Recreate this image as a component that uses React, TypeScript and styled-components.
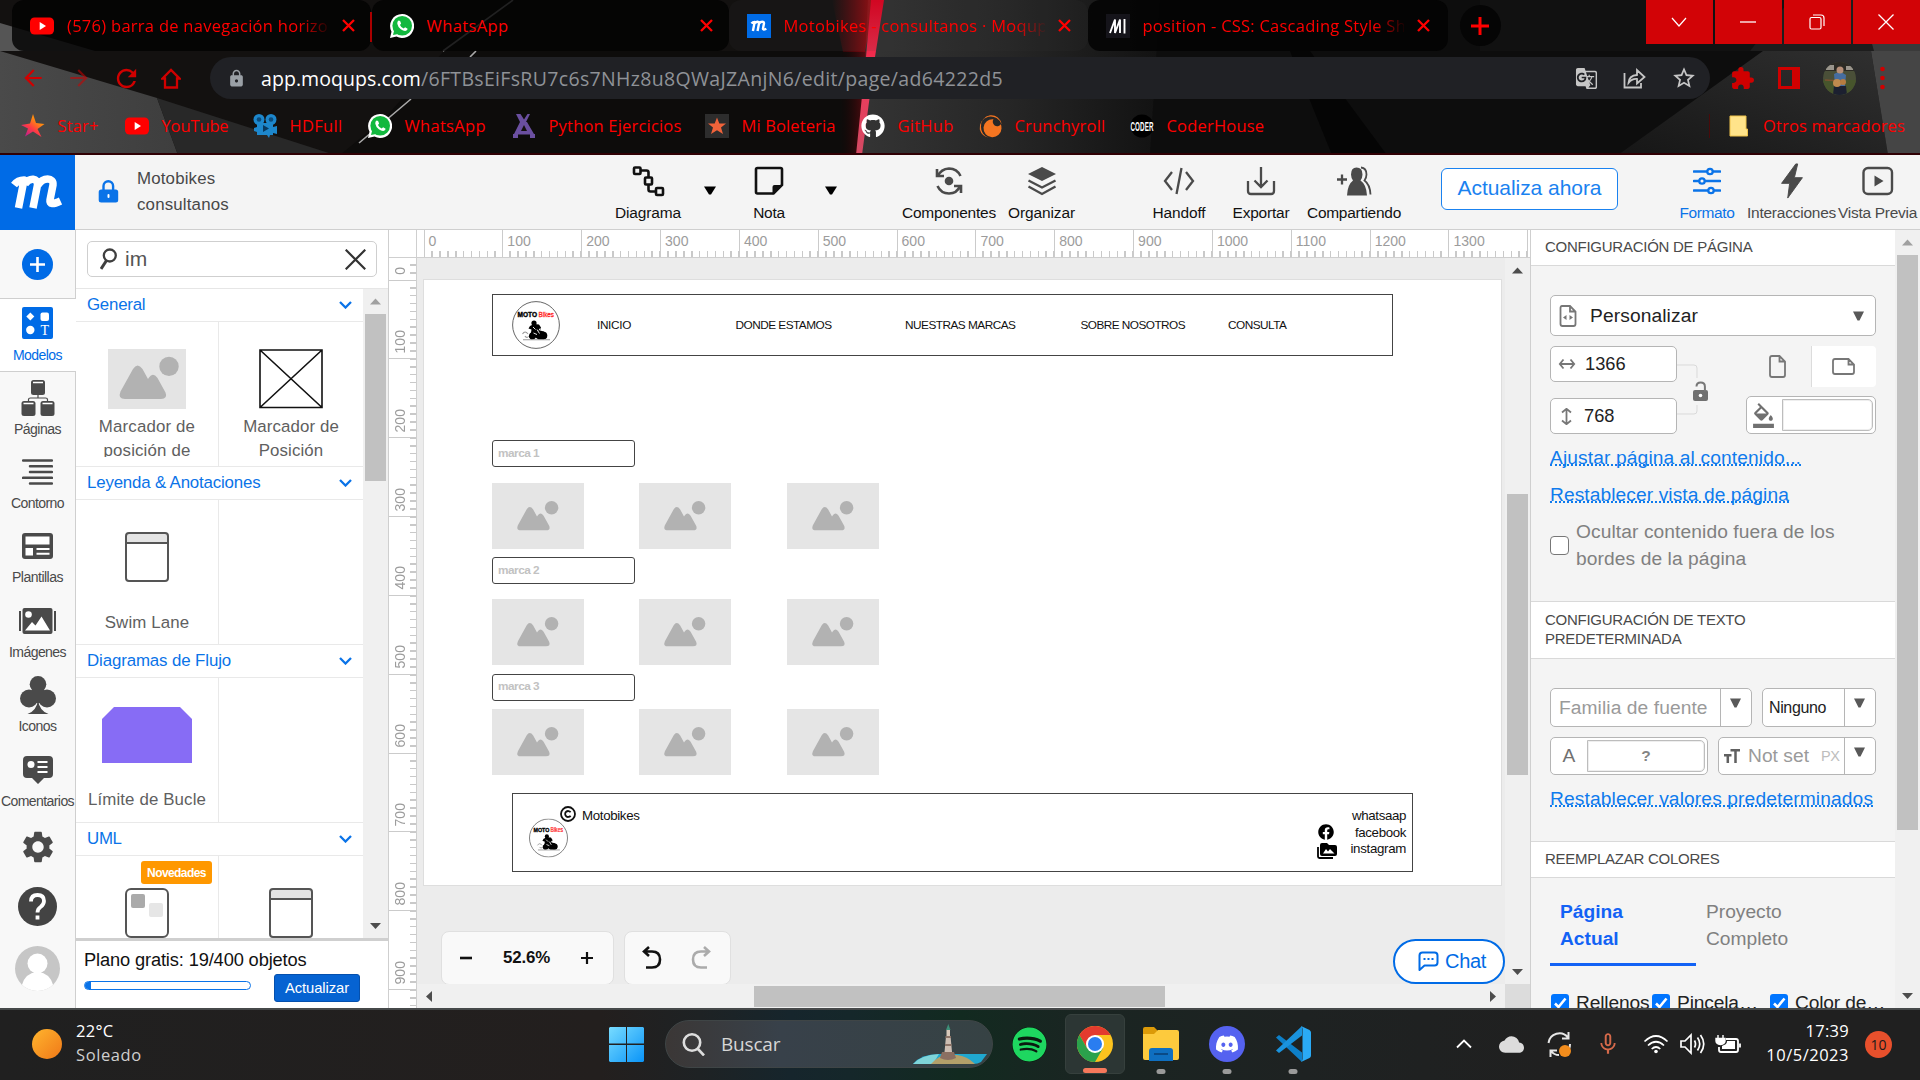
import React from "react";
import styled, { createGlobalStyle, css } from "styled-components";
import {
  MdArrowBack, MdArrowForward, MdRefresh, MdLock, MdGTranslate, MdStarBorder, MdExtension, MdSettings,
  MdMicNone, MdCloud, MdFormatColorFill,
} from "react-icons/md";
import { FaWhatsapp, FaGithub, FaDiscord, FaSpotify, FaFacebook } from "react-icons/fa";

const sans = '"Liberation Sans", Arial, sans-serif';
const ui = '"Open Sans", "Segoe UI", sans-serif';

const Global = createGlobalStyle`
  *{box-sizing:border-box}
  body{margin:0;background:#202020;overflow:hidden;font-family:${sans}}
  svg{display:block;flex:none}
`;

const Screen = styled.div`width:1920px;height:1080px;display:flex;flex-direction:column;overflow:hidden;`;

const Label = styled.span<{ $s?: number; $ls?: number; $c?: string; $b?: boolean }>`
  font-size:${p => p.$s ?? 16.87}px;letter-spacing:${p => p.$ls ?? 0}px;color:${p => p.$c ?? "inherit"};
  font-weight:${p => (p.$b ? 700 : 400)};white-space:nowrap;
`;

/* ---------- browser ---------- */
const Browser = styled.header`position:relative;height:155px;background:#12100f;border-bottom:2px solid #300004;
  display:flex;flex-direction:column;font-family:${ui};overflow:hidden;isolation:isolate;`;
const Backdrop = styled.svg`position:absolute;inset:0;z-index:-1;`;
const TabStrip = styled.div`height:51px;display:flex;padding-left:12px;flex:none;`;
const Tab = styled.div<{ $w: number; $active?: boolean }>`
  width:${p => p.$w}px;height:51px;display:flex;align-items:center;padding-left:18px;border-radius:12px;
  background:${p => (p.$active ? "rgba(60,60,60,.12)" : "rgba(3,3,2,.82)")};color:#f00;
`;
const TabText = styled.div<{ $w: number; $fade?: boolean; $ls?: number }>`
  width:${p => p.$w}px;margin-left:13px;font-size:16.5px;letter-spacing:${p => p.$ls ?? 0.28}px;white-space:nowrap;overflow:hidden;
  ${p => p.$fade && css`mask-image:linear-gradient(90deg,#000 88%,transparent 101%);`}
`;
const TabClose = styled.svg`margin-left:13px;`;
const TabRule = styled.div`width:1.5px;height:30px;background:#a00;margin:12px 0 0 -1px;`;
const NewTab = styled.div`width:41px;height:41px;border-radius:50%;background:#050505;margin:5px 0 0 12px;display:grid;place-items:center;`;
const WinButtons = styled.div`margin-left:auto;display:flex;gap:2px;`;
const WinButton = styled.div`width:67px;height:44px;background:#d20306;display:grid;place-items:center;padding-right:2px;`;

const NavBar = styled.div`height:57px;display:flex;align-items:center;padding:0 0 3px 20px;color:#d00000;flex:none;`;
const NavIcons = styled.div`display:flex;gap:20px;width:190px;align-items:center;`;
const Omnibox = styled.div`width:1500px;height:42px;border-radius:21px;background:#202125;display:flex;align-items:center;padding:0 13px 0 17px;color:#9aa0a6;`;
const Url = styled.div`flex:1;margin-left:15px;font-size:19.5px;white-space:nowrap;color:#8f9297;letter-spacing:.33px;
  b{font-weight:400;color:#fff;letter-spacing:.07px}`;
const OmniIcons = styled.div`display:flex;gap:25px;color:#c6c6c6;align-items:center;`;
const ExtIcons = styled.div`display:flex;align-items:center;margin-left:20px;gap:23px;`;

const Bookmarks = styled.div`height:45px;display:flex;align-items:center;padding:0 15px 10px 21px;color:#f00;font-size:16.5px;flex:none;`;
const Bookmark = styled.div<{ $w?: number; $ls?: number }>`
  display:flex;align-items:center;gap:12.5px;width:${p => (p.$w ? p.$w + "px" : "auto")};letter-spacing:${p => p.$ls ?? 0.2}px;white-space:nowrap;flex:none;
`;
const OtherMarks = styled.div`margin-left:auto;display:flex;align-items:center;gap:15px;letter-spacing:.14px;padding-left:19px;border-left:1px solid #4a0a0a;height:24px;`;

const YouTubeIcon = () => (
  <svg width="24" height="24" viewBox="0 0 24 24"><rect y="3.5" width="24" height="17" rx="4.5" fill="#f00" /><path d="M9.700 8v8l6.300-4z" fill="#fff" /></svg>
);
const WhatsIcon = () => (
  <svg width="24" height="24" viewBox="0 0 24 24">
    <path d="M12 0a12 12 0 1 1-5.500 22.600L0 24l1.500-6.300A12 12 0 0 1 12 0z" fill="#fff" />
    <circle cx="12.200" cy="11.800" r="9.800" fill="#12b83e" /><path d="M3 21l1.300-5 4 4z" fill="#12b83e" />
    <path d="M8.600 6.600q-1.600.9-1.300 3.100.6 3.300 3.500 5.500 3 2.200 5.200 1.600 1.500-.5 1.600-2.100l-2.500-1.500-1.400 1.400q-2.600-1-3.700-3.700l1.100-1.300-1-2.700z" fill="#fff" />
  </svg>
);
const MScript = ({ size, fill }: { size: number; fill: string }) => (
  <svg width={size} height={size} viewBox="0 0 75 75"><rect width="75" height="75" fill={fill} />
    <path d="M14 30 Q18 25 24 25 L18.500 53 M25 29 C30 22 38 23 37.500 30 L33 53 M38 30 C43 22 54 22 53 30 L50 45 Q49 51.500 60.500 46" fill="none" stroke="#fff" strokeWidth="7.500" strokeLinejoin="round" />
  </svg>
);
const MozIcon = () => (
  <svg width="24" height="24" viewBox="0 0 24 24"><rect width="24" height="24" fill="#15141a" /><path d="M4 19 9 5.500V19L14 5.500V19M18.500 5v14.500" fill="none" stroke="#fff" strokeWidth="1.900" strokeLinejoin="bevel" /></svg>
);
const CloseX = () => <TabClose width="13" height="13" viewBox="0 0 13 13"><path d="M1 1l11 11M12 1 1 12" stroke="#f00" strokeWidth="2.300" /></TabClose>;

const BrowserBackdrop = () => (
  <Backdrop width="1920" height="155" viewBox="0 0 1920 155">
    <defs>
      <linearGradient id="glow" x1="0" x2="1"><stop offset="0" stopColor="#a0000c" stopOpacity="0" /><stop offset="1" stopColor="#b80c10" stopOpacity=".9" /></linearGradient>
      <linearGradient id="grayGlow" x1="0" x2="1"><stop offset="0" stopColor="#343434" /><stop offset=".45" stopColor="#262626" /><stop offset="1" stopColor="#0e0e0e" /></linearGradient>
      <linearGradient id="beam" x1="0" y1="0" x2="0" y2="1"><stop offset="0" stopColor="#e6001f" /><stop offset=".45" stopColor="#f4385a" /><stop offset="1" stopColor="#d24a63" /></linearGradient>
      <linearGradient id="lowGlow" x1="0" x2="1"><stop offset="0" stopColor="#200" stopOpacity="0" /><stop offset="1" stopColor="#7a0c14" stopOpacity=".7" /></linearGradient>
      <linearGradient id="slab" x1="0" y1="1" x2="1" y2="0"><stop offset="0" stopColor="#161616" /><stop offset="1" stopColor="#303030" /></linearGradient>
      <linearGradient id="leftSlab" x1="0" x2="1"><stop offset="0" stopColor="#4a4a4a" /><stop offset="1" stopColor="#3e3e3e" /></linearGradient>
    </defs>
    <path d="M0 0h868v155H0z" fill="#131110" />
    <path d="M0 51 157 98 178 155H0z" fill="url(#leftSlab)" />
    <path d="M157 98 335 155H178z" fill="#282828" />
    <path d="M0 23 95 51H0z" fill="#555" />
    <path d="M444 51 385 118 340 155H868V51z" fill="#0d0c0b" />
    <path d="M513 0 443 51M476 51 470 57M411 99 359 143" stroke="#a9a9a9" strokeWidth="1.600" fill="none" />
    <path d="M868 0h322l-30 155H860z" fill="url(#grayGlow)" />
    <path d="M832 0h43l-10 52h-22z" fill="url(#glow)" />
    <path d="M840 51h26l-8 104h-18z" fill="url(#lowGlow)" />
    <path d="M871 0h13l-9 57-13 98h-6l10-98z" fill="url(#beam)" />
    <path d="M1160 0h760v155h-770z" fill="#0d0d0d" />
    <path d="M1290 51h20l77 104h-55z" fill="#050505" />
    <path d="M1763 51 1618 155h270l-17-104z" fill="url(#slab)" />
    <path d="M1480 0h440v51h-440z" fill="#111" />
    <path d="M1790 0h130v51h-170z" fill="#1d1d1d" />
    <path d="M1871 51h49v104h-32z" fill="#454545" /><path d="M1860 0h60v51h-46z" fill="#3a3a3a" />
  </Backdrop>
);

/* ---------- editor header ---------- */
const Head = styled.div`height:75px;background:#f4f4f4;border-bottom:1px solid #cfcfcf;display:flex;flex:none;color:#111;`;
const Brand = styled.div`width:75px;height:75px;background:#006be6;flex:none;`;
const DocTitle = styled.div`display:flex;align-items:center;width:523px;padding-left:23px;gap:18px;color:#484848;line-height:26px;padding-bottom:1px;`;
const Tool = styled.div<{ $w: number; $ml?: number; $c?: string }>`
  width:${p => p.$w}px;margin-left:${p => p.$ml ?? 0}px;color:${p => p.$c ?? "#111"};display:flex;flex-direction:column;align-items:center;flex:none;
  svg{height:36px;margin-top:8px} span{line-height:20px;margin-top:4px}
`;
const Caret = styled.div<{ $ml: number }>`width:22px;margin-left:${p => p.$ml}px;display:flex;justify-content:center;padding-top:31px;`;
const Upgrade = styled.div`width:177px;height:42px;margin:13px 0 0 37px;border:1.5px solid #1a82f0;border-radius:6px;background:#fff;color:#1a82f0;display:grid;place-items:center;padding-bottom:2px;`;

/* ---------- editor body ---------- */
const Body = styled.div`height:778px;display:flex;flex:none;overflow:hidden;background:#fff;`;
const Rail = styled.div`width:76px;background:#f8f8f8;border-right:1px solid #cfcfcf;display:flex;flex-direction:column;flex:none;`;
const RailAdd = styled.div`height:69px;border-bottom:1px solid #cfcfcf;display:flex;justify-content:center;padding-top:18.5px;flex:none;`;
const RailItem = styled.div<{ $on?: boolean }>`
  height:${p => (p.$on ? 72.6 : 74.4)}px;flex:none;width:75px;display:flex;flex-direction:column;align-items:center;color:${p => (p.$on ? "#006be6" : "#4a4a4a")};
  ${p => p.$on && css`background:#fff;border-bottom:1px solid #cfcfcf;width:76px;padding-right:1px;`}
  svg{margin-top:${p => (p.$on ? 4 : 6)}px;height:40px} span{line-height:18px;margin-top:${p => (p.$on ? 3 : 2)}px}
`;
const RailBox = styled.div<{ $h: number }>`height:${p => p.$h}px;display:grid;place-items:center;flex:none;width:75px;`;

const Library = styled.div`width:313px;border-right:1px solid #cfcfcf;display:flex;flex-direction:column;flex:none;`;
const SearchRow = styled.div`height:59px;border-bottom:1px solid #e6e6e6;padding:11px 11px 0 11px;flex:none;`;
const SearchBox = styled.div`height:36px;border:1px solid #cfcfcf;border-radius:5px;display:flex;align-items:center;padding:0 10px 0 12px;color:#555;
  span{flex:1;margin-left:8px}`;
const Shelf = styled.div`display:flex;height:649px;flex:none;`;
const Stencils = styled.div`width:287px;overflow:hidden;`;
const GroupHead = styled.div`height:33px;display:flex;align-items:center;justify-content:space-between;padding:0 11px;border-bottom:1px solid #e9e9e9;color:#0a73e8;`;
const Cells = styled.div`display:grid;grid-template-columns:143px 144px;height:145px;border-bottom:1px solid #e9e9e9;`;
const Cell = styled.div<{ $pt: number; $gap?: number }>`
  display:flex;flex-direction:column;align-items:center;padding-top:${p => p.$pt}px;gap:${p => p.$gap ?? 6}px;color:#606060;line-height:24px;text-align:center;
  overflow:hidden;position:relative;&:first-child{border-right:1px solid #e9e9e9}
`;
const TwoLines = styled.div`height:42px;overflow:hidden;`;
const New = styled.div`position:absolute;right:6px;top:5px;height:23px;width:71px;background:#ff9800;border-radius:3px;color:#fff;display:grid;place-items:center;line-height:1;`;
const Plan = styled.div`border-top:3px solid #cfcfcf;height:70px;padding:7px 28px 0 8px;color:#111;flex:none;display:flex;flex-direction:column;line-height:24px;`;
const PlanRow = styled.div`display:flex;justify-content:space-between;margin-top:2px;`;
const Meter = styled.div`width:167px;height:9px;margin-top:7px;border:1px solid #0a73e8;border-radius:5px;overflow:hidden;&::before{content:"";display:block;width:6px;height:9px;background:#0a73e8}`;
const PlanButton = styled.div`width:86px;height:28px;background:#0663d2;border:1px solid #0550ad;border-radius:3px;color:#fff;display:grid;place-items:center;padding-bottom:1px;`;

/* ---------- scrollbars ---------- */
const Bar = styled.div<{ $h?: boolean }>`display:flex;flex-direction:${p => (p.$h ? "row" : "column")};background:#f0f0f0;${p => (p.$h ? "height:24px" : "width:25px")};flex:none;align-items:center;`;
const BarEnd = styled.div`width:25px;height:25px;display:grid;place-items:center;flex:none;`;
const Thumb = styled.div<{ $h?: boolean; $at: number; $len: number }>`background:#c1c1c1;flex:none;
  ${p => (p.$h ? css`width:${p.$len}px;height:21px;margin:0 auto 0 ${p.$at}px;` : css`height:${p.$len}px;width:21px;margin:${p.$at}px 0 auto;`)}`;
const arrows: Record<string, string> = { up: "M0 8.500 5.500 2.500 11 8.500z", down: "M0 3 5.500 9 11 3z", left: "M8 0 2 5.500 8 11z", right: "M3 0 9 5.500 3 11z" };
const Arrow = ({ d, c = "#4d4d4d" }: { d: string; c?: string }) => <BarEnd><svg width="11" height="11" viewBox="0 0 11 11"><path d={arrows[d]} fill={c} /></svg></BarEnd>;
const Scroll = ({ h, at, len, dim }: { h?: boolean; at: number; len: number; dim?: boolean }) => (
  <Bar $h={h}><Arrow d={h ? "left" : "up"} c={dim ? "#a0a0a0" : undefined} /><Thumb $h={h} $at={at} $len={len} /><Arrow d={h ? "right" : "down"} /></Bar>
);

/* ---------- canvas ---------- */
const Center = styled.div`width:1142px;display:flex;flex-direction:column;flex:none;border-right:1px solid #cfcfcf;`;
const RulerTop = styled.div`height:28px;border-bottom:1px solid #cfcfcf;display:flex;overflow:hidden;flex:none;background:#fff;`;
const Corner = styled.div`width:28px;border-right:1px solid #cfcfcf;margin-right:6.5px;flex:none;`;
const SegX = styled.div`width:78.85px;flex:none;border-left:1.5px solid #cbcbcb;padding-left:4px;color:#9c9c9c;font-size:14.06px;line-height:22px;
  background:repeating-linear-gradient(90deg,transparent 0 6.385px,#c9c9c9 6.385px 7.885px) 0 100%/100% 6px no-repeat;`;
const Work = styled.div`display:flex;flex:1;`;
const RulerLeft = styled.div`width:28px;border-right:1px solid #cfcfcf;overflow:hidden;display:flex;flex-direction:column;flex:none;background:#fff;`;
const SegY = styled.div<{ $len?: number }>`height:${p => p.$len ?? 78.85}px;flex:none;border-bottom:1.5px solid #cbcbcb;color:#9c9c9c;font-size:14.06px;line-height:14px;display:flex;align-items:flex-end;padding:0 0 5px 4px;
  background:repeating-linear-gradient(0deg,transparent 0 6.385px,#c9c9c9 6.385px 7.885px) 100% 0/6px 100% no-repeat;
  span{writing-mode:vertical-rl;transform:rotate(180deg)}`;
const Stage = styled.div`display:grid;grid-template-columns:1088px 25px;grid-template-rows:726px 24px;`;
const Viewport = styled.div`position:relative;background:#ececec;overflow:hidden;`;
const CornerBox = styled.div`background:#dcdcdc;`;
const Page = styled.div`position:absolute;left:6px;top:21px;width:1079px;height:607px;background:#fff;border:1px solid #dedede;`;
const Shape = styled.div<{ $x: number; $y: number; $w: number; $h: number; $r?: number }>`
  position:absolute;left:${p => p.$x - 424}px;top:${p => p.$y - 280}px;width:${p => p.$w}px;height:${p => p.$h}px;border:1px solid #444;border-radius:${p => p.$r ?? 0}px;
`;
const Pin = styled.div<{ $x: number; $y: number; $end?: boolean }>`
  position:absolute;top:${p => p.$y - 280}px;transform:translateY(-50%);display:flex;color:#111;
  ${p => (p.$end ? css`right:${1501 - p.$x}px;` : css`left:${p.$x - 424}px;`)}
`;
const BrandField = styled(Shape)`display:flex;align-items:center;padding:0 0 2px 5px;`;
const Float = styled.div<{ $x: number; $w: number }>`position:absolute;left:${p => p.$x}px;top:673px;width:${p => p.$w}px;height:54px;background:#f9f9f9;border:1px solid #e0e0e0;border-radius:8px;
  display:flex;align-items:center;justify-content:space-between;padding:0 19px 1px 17px;color:#111;`;
const Chat = styled.div`position:absolute;left:976px;top:681px;width:112px;height:45px;border:2.5px solid #006be6;border-radius:23px;background:#fff;color:#006be6;display:flex;align-items:center;padding-left:23px;gap:6px;`;

const Mountains = () => (
  <g fill="#b2b2b2"><path d="M17 50H53q7 0 4.500-6.500L49.500 29q-4.500-6-8.500-.5L40 30 34.500 20q-5-7-9.500 0L12.500 42.500Q9.500 50 17 50z" /><circle cx="61" cy="17.400" r="9.700" /></g>
);
const Placeholder = () => (
  <svg width="92" height="66" viewBox="0 0 92 66"><rect width="92" height="66" fill="#e5e5e5" /><g transform="translate(17.200 12.600) scale(.695)"><Mountains /></g></svg>
);
const MotoLogo = ({ size }: { size: number }) => (
  <svg width={size} height={size} viewBox="0 0 48 48">
    <circle cx="24" cy="24" r="23.400" fill="#fff" stroke="#555" strokeWidth=".9" />
    <text x="5.500" y="16.200" fontFamily={sans} fontWeight="700" fontSize="7" textLength="19.500" lengthAdjust="spacingAndGlyphs" fill="#000" stroke="#000" strokeWidth=".4">MOTO</text>
    <text x="26.500" y="16.200" fontFamily={sans} fontSize="8" textLength="15.500" lengthAdjust="spacingAndGlyphs" fill="#f22" stroke="#f22" strokeWidth=".3">Bikes</text>
    <circle cx="22" cy="22" r="2.600" />
    <path d="M18 25l4-2 5 .500 2 3-1 3 4 1 2.500 3v3.500l-3 1.500h-5l-3-2-4 2-3-3 2.500-4 .500-3-3-1z" />
    <circle cx="20.500" cy="35" r="3.400" /><circle cx="31.500" cy="34.500" r="3.800" />
    <path d="M21 26l2.500 2.500M25 28.500l2.500 4M21.500 32l3.500 1.500M28 27.500l-1 2" stroke="#fff" strokeWidth=".9" />
    <path d="M10.500 33q2.500-4 5.500 0M13 35q1 2 3 1M11 38.700H38" fill="none" stroke="#999" strokeWidth="1.100" />
  </svg>
);

/* ---------- inspector ---------- */
const Inspector = styled.div`width:364px;background:#f4f4f4;overflow:hidden;flex:none;`;
const Title = styled.div<{ $h: number }>`height:${p => p.$h}px;background:#fff;border-bottom:1px solid #d9d9d9;display:flex;align-items:center;padding:0 0 1.5px 14px;color:#4a4a4a;font-size:15px;letter-spacing:-.26px;line-height:19.600px;
  &:not(:first-child){border-top:1px solid #d9d9d9}`;
const Section = styled.div<{ $h: number; $pt: number }>`height:${p => p.$h}px;padding:${p => p.$pt}px 19px 0;display:flex;flex-direction:column;`;
const Field = styled.div<{ $w: number; $h: number }>`width:${p => p.$w}px;height:${p => p.$h}px;background:#fff;border:1px solid #b5b5b5;border-radius:5px;display:flex;align-items:center;flex:none;color:#222;`;
const FieldEnd = styled.div`margin-left:auto;padding-right:11px;`;
const Drop = styled.div`width:31px;height:100%;margin-left:auto;border-left:1px solid #b5b5b5;display:flex;justify-content:center;padding:9px 2px 0 0;flex:none;`;
const Row = styled.div<{ $mt?: number }>`display:flex;justify-content:space-between;margin-top:${p => p.$mt ?? 0}px;`;
const SizeGrid = styled.div`display:grid;grid-template-columns:127px 37px 1fr;margin-top:10px;height:88px;`;
const Stack = styled.div<{ $end?: boolean }>`display:flex;flex-direction:column;justify-content:space-between;${p => p.$end && css`align-items:flex-end;`}`;
const Orient = styled.div`display:flex;align-items:center;width:130px;height:41px;`;
const OrientHalf = styled.div<{ $on?: boolean }>`width:65px;height:41px;display:grid;place-items:center;padding-right:2px;${p => p.$on && css`background:#fff;border-left:1px solid #dcdcdc;border-radius:0 4px 4px 0;`}`;
const Inset = styled.div`flex:1;height:calc(100% - 4px);margin-right:2px;border:1px solid #bdbdbd;border-radius:0 5px 5px 0;box-shadow:inset 0 0 0 1px #eee;display:grid;place-items:center;color:#858585;`;
const Bucket = styled.div`width:35px;display:grid;place-items:center;flex:none;padding-right:2px;`;
const PadText = styled.div<{ $tight?: boolean }>`padding-left:${p => (p.$tight ? 6 : 8)}px;`;
const Letter = styled.div`width:36px;text-align:center;flex:none;`;
const Unit = styled.span`font-size:14.5px;color:#bdbdbd;margin-left:12px;letter-spacing:-.5px;`;
const Link = styled.a<{ $mt: number; $ls?: number }>`color:#0f7bed;font-size:19.2px;line-height:23px;height:20px;margin-top:${p => p.$mt}px;align-self:flex-start;border-bottom:2px dotted #0f7bed;letter-spacing:${p => p.$ls ?? 0.08}px;white-space:nowrap;`;
const CheckRow = styled.div`display:flex;align-items:center;gap:7px;margin-top:16px;font-size:19.2px;line-height:26.500px;color:#808080;letter-spacing:.09px;`;
const EmptyCheck = styled.div`width:19px;height:19px;border:1.5px solid #777;border-radius:4px;background:#fff;flex:none;`;
const Tabs = styled.div`display:flex;line-height:27px;font-size:19.2px;`;
const ColorTab = styled.div<{ $on?: boolean }>`width:146px;height:88px;padding:20px 0 0 10px;color:#808080;${p => p.$on && css`color:#1262f5;font-weight:700;border-bottom:3px solid #1262f5;`}`;
const Checks = styled.div`display:grid;grid-template-columns:101px 118px 1fr;margin-top:27px;font-size:19.2px;line-height:20px;color:#222;white-space:nowrap;`;
const Check = styled.div`display:flex;gap:7px;align-items:flex-start;padding-left:1px;letter-spacing:-.15px;svg{margin-top:1px}`;

const Tri = () => <svg width="11" height="10" viewBox="0 0 11 10"><path d="M0 .5h11L6.500 9.500h-2z" fill="#595959" /></svg>;
const Blue = () => <svg width="18" height="18" viewBox="0 0 18 18"><rect width="18" height="18" rx="3" fill="#0075ff" /><path d="M4 9.500 7.500 13 14.500 4.500" fill="none" stroke="#fff" strokeWidth="2.600" /></svg>;

/* ---------- taskbar ---------- */
const Taskbar = styled.footer`height:72px;border-top:2px solid #46494a;background:linear-gradient(90deg,#202020 0,#231f1e 600px,#1e2224 700px,#16252c 790px,#15272a 850px,#122a20 960px,#1a2522 1080px,#1e2222 1300px,#202020 1550px);
  display:flex;align-items:center;font-family:${ui};color:#fff;flex:none;padding-bottom:2px;`;
const Weather = styled.div`display:flex;align-items:center;gap:14px;width:609px;padding-left:32px;`;
const Two = styled.div<{ $end?: boolean }>`display:flex;flex-direction:column;line-height:24px;margin-top:-2px;${p => p.$end && css`align-items:flex-end;`}`;
const SearchPill = styled.div`width:328px;height:48px;border-radius:24px;margin-left:21px;border:1px solid #3f4546;background:linear-gradient(90deg,#3b3736,#38414a 35%,#364244);display:flex;align-items:center;padding:0 5px 0 16px;color:#d6d6d6;overflow:hidden;`;
const PillText = styled.span`margin:0 auto 0 16px;font-size:19px;letter-spacing:-.2px;`;
const Apps = styled.div`display:flex;margin-left:6px;gap:6px;`;
const AppTile = styled.div<{ $on?: boolean }>`width:60px;height:60px;border-radius:6px;display:grid;place-items:center;position:relative;${p => p.$on && css`background:#2c3634;border:1px solid #36403d;`}`;
const Mark = styled.div<{ $on?: boolean }>`position:absolute;bottom:0;left:50%;transform:translateX(-50%);height:5px;border-radius:3px;width:${p => (p.$on ? 24 : 9)}px;background:${p => (p.$on ? "#f7785b" : "#9a9a9a")};`;
const SpotDisc = styled.div`border-radius:50%;background:#0b1a10;`;
const Disc = styled.div`width:36px;height:36px;border-radius:50%;background:#5562f0;display:grid;place-items:center;color:#fff;`;
const Tray = styled.div`margin-left:auto;display:grid;grid-template-columns:35.5px 60.5px 35.5px 60.5px 36px 36px 36px;place-items:center;`;
const Clock = styled.div`width:103px;display:flex;justify-content:flex-end;`;
const Count = styled.div`width:27px;height:27px;border-radius:50%;background:#e8502c;color:#1a1a1a;display:grid;place-items:center;margin:0 28px 0 16px;font-size:14px;`;

const I = ({ w, h, vb, children, sw = 2, c = "currentColor" }: { w: number; h: number; vb?: string; children: React.ReactNode; sw?: number; c?: string }) => (
  <svg width={w} height={h} viewBox={vb ?? `0 0 ${w} ${h}`} fill="none" stroke={c} strokeWidth={sw}>{children}</svg>
);

const SwimLane = () => <I w={44} h={50} c="#555"><path d="M2 2h40v9H2z" fill="#e4e4e4" stroke="none" /><rect x="1" y="1" width="42" height="48" rx="3" /><path d="M1 11h42" /></I>;

const Group = ({ title, ls, children }: { title: string; ls: number; children: React.ReactNode }) => (
  <>
    <GroupHead><Label $ls={ls}>{title}</Label><I w={13} h={8} sw={2.3}><path d="M1 1l5.500 5.500L12 1" /></I></GroupHead>
    <Cells>{children}</Cells>
  </>
);

const rail: [string, number, React.ReactNode][] = [
  ["Páginas", -0.54, <I key="p" w={34} h={36} sw={1.2}><g fill="currentColor" stroke="none"><rect x="10" width="14" height="15" rx="2.500" /><rect x=".500" y="21" width="14" height="15" rx="2.500" /><rect x="19.500" y="21" width="14" height="15" rx="2.500" /></g><path d="M17 15v3M7.500 21v-1.500Q7.500 18 9.500 18h15q2 0 2 1.500V21" /><path d="M12 2.500h10M2.500 23.500h10M21.500 23.500h10" stroke="#fff" strokeWidth="1.500" /></I>],
  ["Contorno", -0.6, <I key="c" w={31} h={26} sw={2.5}><path d="M1 1.500h29M8 7.300h22M8 13h22M1 18.800h29M8 24.500h22" strokeLinecap="round" /></I>],
  ["Plantillas", -0.52, <I key="t" w={31} h={26}><rect width="31" height="26" rx="3" fill="currentColor" stroke="none" /><path d="M3.500 3.500h24v8h-24zM3.500 15h7.500v7.500H3.500z" fill="#fff" stroke="none" /><path d="M14.500 16h13M14.500 20.800h13" stroke="#fff" /></I>],
  ["Imágenes", -0.59, <I key="i" w={37} h={26}><path d="M1 3v20M36 3v20" /><rect x="3.500" width="30" height="26" rx="2" fill="currentColor" stroke="none" /><path d="M6 22.500 13 14l3.500 3.500 6-9 8.500 14z" fill="#fff" stroke="none" /><circle cx="9.500" cy="6.500" r="3.300" fill="#fff" stroke="none" /></I>],
  ["Iconos", -0.56, <I key="o" w={36} h={38}><g fill="currentColor" stroke="none"><circle cx="18" cy="8.300" r="8.300" /><circle cx="9" cy="22.500" r="9" /><circle cx="27" cy="22.500" r="9" /><path d="M12 14h12v13H12zM18 24q1.500 11 10.500 14h-21Q16.500 35 18 24z" /></g></I>],
  ["Comentarios", -0.6, <I key="m" w={30} h={28}><path d="M4 0h22q4 0 4 4v14q0 4-4 4h-5l-6 6-6-6H4q-4 0-4-4V4q0-4 4-4z" fill="currentColor" stroke="none" /><circle cx="8" cy="8.500" r="3.500" fill="#fff" stroke="none" /><path d="M14.500 6h10M14.500 11h10M14.500 16h10" stroke="#fff" strokeWidth="1.800" /></I>],
];

const nav: [string, number, number][] = [["INICIO", 597, -0.34], ["DONDE ESTAMOS", 735.5, -0.51], ["NUESTRAS MARCAS", 905, -0.5], ["SOBRE NOSOTROS", 1080.5, -0.54], ["CONSULTA", 1228, -0.5]];

export default function App() {
  return (
    <Screen>
      <Global />
      <Browser>
        <BrowserBackdrop />
        <TabStrip>
          <Tab $w={359}><YouTubeIcon /><TabText $w={262} $fade>(576) barra de navegación horizontal</TabText><CloseX /></Tab>
          <TabRule />
          <Tab $w={357}><WhatsIcon /><TabText $w={260} $ls={0.39}>WhatsApp</TabText><CloseX /></Tab>
          <Tab $w={359} $active><MScript size={24} fill="#006be6" /><TabText $w={261} $fade>Motobikes - consultanos · Moqups</TabText><CloseX /></Tab>
          <Tab $w={360}><MozIcon /><TabText $w={261} $fade $ls={0.24}>position - CSS: Cascading Style Sheets</TabText><CloseX /></Tab>
          <NewTab><I w={18} h={18} c="#f00" sw={3}><path d="M9 0v18M0 9h18" /></I></NewTab>
          <WinButtons>
            <WinButton><I w={16} h={10} c="#fff" sw={1.2}><path d="M1 1l7 8 7-8" /></I></WinButton>
            <WinButton><I w={16} h={10} c="#fff" sw={1.3}><path d="M0 5h16" /></I></WinButton>
            <WinButton><I w={16} h={16} c="#fff" sw={1.2}><rect x="1" y="3.500" width="11" height="11.500" rx="1.500" /><path d="M4 1h8q3 0 3 3v8" /></I></WinButton>
            <WinButton><I w={16} h={16} c="#fff" sw={1.3}><path d="M.5.5l15 15M15.500.5l-15 15" /></I></WinButton>
          </WinButtons>
        </TabStrip>
        <NavBar>
          <NavIcons>
            <MdArrowBack size={26} /><MdArrowForward size={26} opacity={0.55} /><MdRefresh size={29} />
            <I w={20} h={21} sw={2.3}><path d="M1.500 10.500 10 2l8.500 8.500H16V19.500H4V10.500z" /></I>
          </NavIcons>
          <Omnibox>
            <MdLock size={19} />
            <Url><b>app.moqups.com</b>/6FTBsEiFsRU7c6s7NHz8u8QWaJZAnjN6/edit/page/ad64222d5</Url>
            <OmniIcons>
              <MdGTranslate size={23} />
              <I w={23} h={22} sw={1.8}><path d="M1.500 6v14.500H18V16M5.500 16Q6 8.500 14 8V3l7.500 7L14 16.500V12Q9 11.500 5.500 16z" /></I>
              <MdStarBorder size={26} />
            </OmniIcons>
          </Omnibox>
          <ExtIcons>
            <MdExtension size={25} />
            <I w={22} h={22} sw={3}><rect x="1.500" y="1.500" width="19" height="19" /><path d="M14 1h7v20h-7z" fill="currentColor" stroke="none" /></I>
            <svg width="33" height="33" viewBox="0 0 33 33">
              <clipPath id="pf"><circle cx="16.500" cy="16.500" r="16.500" /></clipPath>
              <g clipPath="url(#pf)"><rect width="33" height="33" fill="#4a4f38" /><path d="M0 0h33v9H0z" fill="#2c2a24" /><path d="M3 3h8v5H3zM23 4h7v4h-7z" fill="#9a958c" /><path d="M0 18h33v15H0z" fill="#47552c" /><path d="M11 12q6-4 12 1l-1 11H12z" fill="#466d9f" /><circle cx="17" cy="8" r="3.500" fill="#b78f78" /><path d="M11 24h12l1 9H10z" fill="#1c2030" /><path d="M2 18l16 1" stroke="#7a5230" strokeWidth="1.500" /><circle cx="14" cy="21" r="4" fill="#c08a4e" /><circle cx="20" cy="20" r="3" fill="#b57c40" /></g>
            </svg>
            <svg width="6" height="24" viewBox="0 0 6 24" fill="currentColor"><circle cx="5" cy="3" r="2.300" transform="translate(-1.500)" /><circle cx="3.500" cy="12" r="2.300" /><circle cx="3.500" cy="21" r="2.300" /></svg>
          </ExtIcons>
        </NavBar>
        <Bookmarks>
          <Bookmark $w={104} $ls={0.14}>
            <svg width="24" height="24" viewBox="0 0 24 24"><defs><linearGradient id="st" x1="0" y1="1" x2=".8" y2="0"><stop offset=".15" stopColor="#c0208a" /><stop offset=".45" stopColor="#ff3a45" /><stop offset=".75" stopColor="#ff8a10" /></linearGradient></defs><path d="M12 0l3 9 8.500 1-7 5 4 8L12 17.500 4 22.500l3-8L0 11l9-1.500z" fill="url(#st)" /></svg>
            Star+
          </Bookmark>
          <Bookmark $w={128} $ls={-0.12}><YouTubeIcon />YouTube</Bookmark>
          <Bookmark $w={115} $ls={0.32}>
            <svg width="24" height="24" viewBox="0 0 24 24"><g fill="#1d87cc"><circle cx="6" cy="5.500" r="5.500" /><circle cx="18" cy="5.500" r="5.500" /><path d="M1 14l3-1V9h16v4l4-1v8l-4-1v2h-3l-1 3-2-3H4v-3l-3-1z" /></g><circle cx="6" cy="5.500" r="2.300" fill="#0b4c7c" /><circle cx="18" cy="5.500" r="2.300" fill="#0b4c7c" /><path d="M10 11v7l6-3.500z" fill="#083a60" /></svg>
            HDFull
          </Bookmark>
          <Bookmark $w={144} $ls={0.3}><WhatsIcon />WhatsApp</Bookmark>
          <Bookmark $w={193} $ls={0.19}>
            <svg width="24" height="24" viewBox="0 0 24 24" fill="#6a4fa0"><path d="M4 0h4.500L12 5.500 15.500 0H18l-4 8h-6zM8 8h7l7 12h1v4h-5v-3.500H6V24H1v-4h1z" /><path d="M12 11l-3 6h6z" fill="#14110f" /></svg>
            Python Ejercicios
          </Bookmark>
          <Bookmark $w={156} $ls={0.12}>
            <svg width="24" height="24" viewBox="0 0 24 24"><rect width="24" height="24" fill="#2d2d2d" /><path d="M12 3.500l2.300 6H21l-5 4 2 6.500-6-3.800L6 20l2-6.500-5-4h6.700z" fill="#f0633a" /></svg>
            Mi Boleteria
          </Bookmark>
          <Bookmark $w={117} $ls={0.26}><FaGithub size={24} color="#fff" />GitHub</Bookmark>
          <Bookmark $w={152}>
            <svg width="24" height="24" viewBox="0 0 24 24"><path d="M1.800 15.500A11.200 11.200 0 0 1 23.600 10.500 10.300 10.300 0 0 0 3 12.800 10.800 10.800 0 0 0 10.500 23.600 11.500 11.500 0 0 1 1.800 15.500z" fill="#f47521" /><path d="M23.500 14.500A9 9 0 1 1 15.500 5.300a4.300 4.300 0 1 0 7.300 5q.9 2 .7 4.200z" fill="#f47521" /></svg>
            Crunchyroll
          </Bookmark>
          <Bookmark>
            <svg width="24" height="24" viewBox="0 0 24 24"><circle cx="12" cy="12" r="11.500" fill="#000" /><text x=".5" y="16.500" fontFamily={sans} fontSize="12.500" fontWeight="700" fill="#fff" textLength="23" lengthAdjust="spacingAndGlyphs">CODER</text></svg>
            CoderHouse
          </Bookmark>
          <OtherMarks>
            <svg width="19" height="22" viewBox="0 0 19 22"><path d="M1 1h16v13h1.500v7H1z" fill="#ffe38a" stroke="#eec24a" /></svg>
            Otros marcadores
          </OtherMarks>
        </Bookmarks>
      </Browser>

      <Head>
        <Brand><MScript size={75} fill="#006be6" /></Brand>
        <DocTitle>
          <svg width="21" height="23" viewBox="0 0 21 23"><path d="M5.500 10V6a4.800 4.800 0 0 1 9.600 0v4" fill="none" stroke="#0a73e8" strokeWidth="2.400" /><rect x=".7" y="9.500" width="19.500" height="13" rx="2.500" fill="#0a73e8" /><rect x="9.500" y="14" width="2" height="4" rx="1" fill="#fff" /></svg>
          <Label $ls={0.17}>Motobikes<br />consultanos</Label>
        </DocTitle>
        <Tool $w={100}><I w={34} h={34} sw={2.6}><rect x="3" y="3.500" width="6.500" height="6.500" rx="1" /><rect x="14" y="13.500" width="7" height="7" rx="1" /><rect x="25" y="24" width="7" height="7" rx="1" /><path d="M9.500 6.500h6q2 0 2 2v5M17.500 20.500v5q0 2 2 2H25" /></I><Label $s={15.46} $ls={-0.12}>Diagrama</Label></Tool>
        <Caret $ml={1}><svg width="12" height="9" viewBox="0 0 12 9"><path d="M0 .5h12L7 8.500H5z" /></svg></Caret>
        <Tool $w={60} $ml={18}><I w={30} h={30} sw={2.6}><path d="M3.500 2h23q1.500 0 1.500 1.500V19l-8.500 8.500h-16Q2 27.500 2 26V3.500Q2 2 3.500 2z" /><path d="M18.500 28.500V21q0-2 2-2H29z" fill="currentColor" stroke="none" /></I><Label $s={15.46} $ls={-0.29}>Nota</Label></Tool>
        <Caret $ml={21}><svg width="12" height="9" viewBox="0 0 12 9"><path d="M0 .5h12L7 8.500H5z" /></svg></Caret>
        <Tool $w={110} $ml={52}><I w={28} h={30} sw={2.6} c="#4a4a4a"><path d="M2 3v7h7M3 10Q6 3 14 2.500 22 2.500 25.500 10M26 27v-7h-7M25 20Q22 27.500 14 27.500 6 27.500 2.500 20" /><circle cx="14" cy="15" r="4.300" fill="#4a4a4a" stroke="none" /></I><Label $s={15.46} $ls={-0.2}>Componentes</Label></Tool>
        <Tool $w={75}><I w={30} h={30} sw={2.3} c="#4a4a4a"><path d="M15 1l14 7-14 7L1 8z" fill="#4a4a4a" stroke="none" /><path d="M1.500 14.500 15 21.500l13.500-7M1.500 20.500 15 28l13.500-7.500" /></I><Label $s={15.46} $ls={-0.09}>Organizar</Label></Tool>
        <Tool $w={60} $ml={70}><I w={32} h={28} sw={2.3} c="#4a4a4a"><path d="M9 5 2 14l7 9M23 5l7 9-7 9M18.500 1l-5 26" /></I><Label $s={15.46} $ls={-0.12}>Handoff</Label></Tool>
        <Tool $w={60} $ml={22}><I w={30} h={30} sw={2.3} c="#4a4a4a"><path d="M2 15v10q0 3 3 3h20q3 0 3-3V15M15 1v20M8.500 14.500 15 21l6.500-6.500" /></I><Label $s={15.46} $ls={-0.18}>Exportar</Label></Tool>
        <Tool $w={100} $ml={13}><I w={36} h={30} sw={2.3} c="#4a4a4a"><path d="M1 13.500h10M6 8.500v10" /><path d="M20.500 1.500q6 0 6 7 0 3-2 6 6 4 6.500 15H11q.500-11 6-15-2-3-2-6 0-7 5.500-7z" fill="#4a4a4a" stroke="none" /><path d="M25 1.500q5.500.5 5.500 7 0 3-2 6 5.500 4 6 14" strokeWidth="1.800" /></I><Label $s={15.46} $ls={-0.26}>Compartiendo</Label></Tool>
        <Upgrade><Label $s={21} $ls={-0.05}>Actualiza ahora</Label></Upgrade>
        <Tool $w={80} $ml={49} $c="#0a73e8"><I w={28} h={28} sw={2.6}><path d="M1 4.500h26M1 14h26M1 23.500h26" strokeLinecap="round" /><circle cx="17" cy="4.500" r="2.700" fill="#f4f4f4" strokeWidth="2.300" /><circle cx="9" cy="14" r="2.700" fill="#f4f4f4" strokeWidth="2.300" /><circle cx="18" cy="23.500" r="2.700" fill="#f4f4f4" strokeWidth="2.300" /></I><Label $s={15.46} $ls={-0.36}>Formato</Label></Tool>
        <Tool $w={89} $c="#4a4a4a"><svg width="24" height="38" viewBox="0 0 24 38" fill="#4a4a4a"><path d="M16 1 1 21.500h8.500L7.500 37 23 15.500h-8.500L18 1z" stroke="#4a4a4a" strokeLinejoin="round" /></svg><Label $s={15.46} $ls={-0.22}>Interacciones</Label></Tool>
        <Tool $w={83} $c="#4a4a4a"><I w={32} h={30} sw={2.4}><rect x="1.500" y="2" width="28.500" height="26" rx="4.500" /><path d="M12.500 9.500v11l9-5.500z" fill="currentColor" stroke="none" /></I><Label $s={15.46} $ls={-0.26}>Vista Previa</Label></Tool>
      </Head>

      <Body>
        <Rail>
          <RailAdd><svg width="31" height="31" viewBox="0 0 31 31"><circle cx="15.500" cy="15.500" r="15.500" fill="#006be6" /><path d="M15.500 8v15M8 15.500h15" stroke="#fff" strokeWidth="2.600" /></svg></RailAdd>
          <RailItem $on>
            <svg width="31" height="32" viewBox="0 0 31 32"><rect width="31" height="32" rx="2" fill="#006be6" /><path d="M8.300 5.500l4 4-4 4-4-4z" fill="#fff" /><rect x="18.500" y="5.500" width="8.500" height="8.500" rx="2" fill="#fff" /><circle cx="8.300" cy="23" r="4.200" fill="#fff" /><text x="22.800" y="28" textAnchor="middle" fontFamily='"Liberation Serif", serif' fontSize="14" fill="#fff">T</text></svg>
            <Label $s={14.06} $ls={-0.58}>Modelos</Label>
          </RailItem>
          {rail.map(([t, ls, icon]) => <RailItem key={t}>{icon}<Label $s={14.06} $ls={ls}>{t}</Label></RailItem>)}
          <RailBox $h={59}><MdSettings size={38} color="#4a4a4a" /></RailBox>
          <RailBox $h={59}><I w={39} h={39} sw={3.8} c="#fff"><circle cx="19.500" cy="19.500" r="19.500" fill="#434343" stroke="none" /><path d="M13 14.500q0-6.500 6.500-6.500t6.500 6q0 3.500-3.500 6-3 2-3 5.500M19.500 28.500v4" /></I></RailBox>
          <RailBox $h={65}><svg width="45" height="45" viewBox="0 0 45 45"><clipPath id="av"><circle cx="22.500" cy="22.500" r="22.500" /></clipPath><g clipPath="url(#av)"><rect width="45" height="45" fill="#c6c6c6" /><circle cx="22.500" cy="17.500" r="10" fill="#fff" /><path d="M6 45q1-14 11-18h11q10 4 11 18z" fill="#fff" /></g></svg></RailBox>
        </Rail>

        <Library>
          <SearchRow>
            <SearchBox>
              <I w={17} h={22} sw={2.3} c="#3f3f3f"><circle cx="9.800" cy="7.500" r="6" /><path d="M6.500 12.500 1 21" strokeWidth="3" /></I>
              <Label $s={21}>im</Label>
              <I w={21} h={21} sw={2.2} c="#333"><path d="M.7.7l19.500 19.500M20.300.7.7 20.300" /></I>
            </SearchBox>
          </SearchRow>
          <Shelf>
            <Stencils>
              <Group title="General" ls={-0.24}>
                <Cell $pt={27}><svg width="78" height="60" viewBox="0 0 78 60"><rect width="78" height="60" fill="#e4e4e4" /><Mountains /></svg><TwoLines><Label $ls={0.15}>Marcador de<br />posición de</Label></TwoLines></Cell>
                <Cell $pt={27}><I w={64} h={60} sw={1.6} c="#111"><path d="M1 1h62v57.500H1zM1 1l62 57.500M63 1 1 58.500" /></I><TwoLines><Label $ls={0.1}>Marcador de<br />Posición</Label></TwoLines></Cell>
              </Group>
              <Group title="Leyenda & Anotaciones" ls={-0.18}>
                <Cell $pt={32} $gap={29}><SwimLane /><Label $ls={0.12}>Swim Lane</Label></Cell><Cell $pt={0} />
              </Group>
              <Group title="Diagramas de Flujo" ls={-0.12}>
                <Cell $pt={29} $gap={25}><svg width="90" height="56" viewBox="0 0 90 56"><path d="M0 12 12 0h66l12 12v44H0z" fill="#876cf5" /></svg><Label $ls={0.12}>Límite de Bucle</Label></Cell><Cell $pt={0} />
              </Group>
              <Group title="UML" ls={-0.3}>
                <Cell $pt={32}><New><Label $s={12} $ls={-0.57} $b>Novedades</Label></New><I w={44} h={50} c="#555"><rect x="1" y="1" width="42" height="48" rx="5" /><rect x="6" y="6" width="14" height="14" rx="2" fill="#aaa" stroke="none" /><rect x="24" y="15" width="14" height="14" rx="2" fill="#e6e6e6" stroke="none" /></I></Cell>
                <Cell $pt={32}><SwimLane /></Cell>
              </Group>
            </Stencils>
            <Scroll at={0} len={167} dim />
          </Shelf>
          <Plan>
            <Label $s={18.27} $ls={-0.14}>Plano gratis: 19/400 objetos</Label>
            <PlanRow><Meter /><PlanButton><Label $s={14.8} $ls={-0.1}>Actualizar</Label></PlanButton></PlanRow>
          </Plan>
        </Library>

        <Center>
          <RulerTop><Corner />{Array.from({ length: 14 }, (_, i) => <SegX key={i}>{i * 100}</SegX>)}<SegX /></RulerTop>
          <Work>
            <RulerLeft><SegY $len={22.5}><span>0</span></SegY>{Array.from({ length: 9 }, (_, i) => <SegY key={i}><span>{(i + 1) * 100}</span></SegY>)}<SegY /></RulerLeft>
            <Stage>
              <Viewport>
                <Page>
                  <Shape $x={491.5} $y={294} $w={901} $h={62} />
                  <Pin $x={512} $y={325}><MotoLogo size={48} /></Pin>
                  {nav.map(([t, x, ls]) => <Pin key={t} $x={x} $y={325}><Label $s={11.8} $ls={ls}>{t}</Label></Pin>)}
                  {[[440, 483], [557, 599], [673.5, 709]].map(([y, iy], i) => (
                    <React.Fragment key={y}>
                      <BrandField $x={492} $y={y} $w={143} $h={27} $r={3}><Label $s={11.8} $ls={-0.5} $c="#c2c2c2" $b>marca {i + 1}</Label></BrandField>
                      {[492, 639.4, 787].map(x => <Pin key={x} $x={x} $y={iy + 33}><Placeholder /></Pin>)}
                    </React.Fragment>
                  ))}
                  <Shape $x={512} $y={793} $w={901} $h={79} />
                  <Pin $x={528.5} $y={838}><MotoLogo size={39} /></Pin>
                  <Pin $x={560} $y={814}><I w={16} h={16} sw={1.8}><circle cx="8" cy="8" r="7" /><path d="M10.600 6.300a3 3 0 1 0 0 3.400" /></I></Pin>
                  <Pin $x={582} $y={815}><Label $s={13.3} $ls={-0.34}>Motobikes</Label></Pin>
                  <Pin $x={1406} $y={815} $end><Label $s={13.3} $ls={-0.37}>whatsaap</Label></Pin>
                  <Pin $x={1406} $y={832} $end><Label $s={13.3} $ls={-0.37}>facebook</Label></Pin>
                  <Pin $x={1406} $y={848} $end><Label $s={13.3} $ls={-0.32}>instagram</Label></Pin>
                  <Pin $x={1318} $y={832}><FaFacebook size={16} color="#000" /></Pin>
                  <Pin $x={1316.5} $y={851}><svg width="20" height="16" viewBox="0 0 20 16"><path d="M1 4v9.500Q1 15 2.500 15H16" fill="none" stroke="#000" strokeWidth="1.800" /><path d="M5 0h5l2 2h6q2 0 2 2v7q0 2-2 2H5q-2 0-2-2V2q0-2 2-2z" /><path d="M6 10.500 9 6l2 2.500L13 6l4.500 4.500z" fill="#fff" /></svg></Pin>
                </Page>
                <Float $x={24} $w={173}>
                  <I w={14} h={14} sw={2.6}><path d="M1 7h12" /></I><Label $ls={-0.16} $b>52.6%</Label><I w={14} h={14} sw={2.2}><path d="M1 7h12M7 1v12" /></I>
                </Float>
                <Float $x={207} $w={107}>
                  <I w={20} h={24} sw={2.6}><path d="M7 1 2 5.500 7 10M2.500 5.500H10q8 0 8 8t-8 8H4" /></I>
                  <I w={20} h={24} sw={2.6} c="#ababab"><path d="M13 1l5 4.500-5 4.500M17.500 5.500H10q-8 0-8 8t8 8h6" /></I>
                </Float>
                <Chat><I w={21} h={21} sw={2}><path d="M1.500 19V4.500q0-3 3-3h12q3 0 3 3v7q0 3-3 3H6.500z" strokeLinejoin="round" /><path d="M5.500 8h2M9.500 8h2M13.500 8h2" /></I><Label $s={20} $ls={-0.3}>Chat</Label></Chat>
              </Viewport>
              <Scroll at={211} len={281} />
              <Scroll h at={312} len={411} />
              <CornerBox />
            </Stage>
          </Work>
        </Center>

        <Inspector>
          <Title $h={36}>CONFIGURACIÓN DE PÁGINA</Title>
          <Section $h={335} $pt={29}>
            <Field $w={326} $h={41}>
              <I w={39} h={22} sw={1.8} c="#777" vb="-8.5 0 39 22"><path d="M2.500 1h8L16 6.500V19q0 2-2 2H3q-2 0-2-2V3q0-2 1.500-2zM10.500 1v5.500H16" /><path d="M7 10v5l-3.500-2.500zM10 10v5l3.500-2.500z" fill="#777" stroke="none" /></I>
              <Label $s={19.2} $ls={0.11}>Personalizar</Label>
              <FieldEnd><Tri /></FieldEnd>
            </Field>
            <SizeGrid>
              <Stack>
                <Field $w={127} $h={36}><I w={34} h={14} sw={1.8} c="#777" vb="-8 0 34 14"><path d="M1 7h14M4.500 2.500 0.800 7l3.700 4.500M11.500 2.500 15.200 7l-3.700 4.500" /></I><Label $s={18.27}>1366</Label></Field>
                <Field $w={127} $h={36}><I w={33} h={17} sw={1.8} c="#777" vb="-10.5 0 33 17"><path d="M5 1v15M.5 4.500 5 .8l4.500 3.700M.5 12.500 5 16.200l4.500-3.700" /></I><Label $s={18.27}>768</Label></Field>
              </Stack>
              <I w={37} h={88} sw={1} c="#d9d9d9">
                <path d="M0 19h17q3 0 3 3v10M0 68h17q3 0 3-3V59" /><rect x="16" y="44" width="15" height="11" rx="2" fill="#707070" stroke="none" /><path d="M19.500 40.500q0-4 4.200-4t4.200 4v5" stroke="#777" strokeWidth="2" /><circle cx="23.500" cy="49.500" r="1.800" fill="#fff" stroke="none" />
              </I>
              <Stack $end>
                <Orient>
                  <OrientHalf><I w={17} h={23} sw={1.8} c="#777"><path d="M3 1h7.500L16 6.500V20q0 2-2 2H3q-2 0-2-2V3q0-2 2-2zM10.500 1v5.500H16" /></I></OrientHalf>
                  <OrientHalf $on><I w={23} h={17} sw={1.8} c="#777"><path d="M3 1h13.500L22 6.500V14q0 2-2 2H3q-2 0-2-2V3q0-2 2-2zM16.500 1v5.500H22" /></I></OrientHalf>
                </Orient>
                <Field $w={130} $h={38}><Bucket><MdFormatColorFill size={25} color="#707070" /></Bucket><Inset /></Field>
              </Stack>
            </SizeGrid>
            <Link $mt={12} $ls={0.12}>Ajustar página al contenido...</Link>
            <Link $mt={17}>Restablecer vista de página</Link>
            <CheckRow><EmptyCheck /><span>Ocultar contenido fuera de los<br />bordes de la página</span></CheckRow>
          </Section>
          <Title $h={58}>CONFIGURACIÓN DE TEXTO<br />PREDETERMINADA</Title>
          <Section $h={182} $pt={29}>
            <Row>
              <Field $w={202} $h={39}><PadText><Label $s={19.2} $ls={0.08} $c="#9a9a9a">Familia de fuente</Label></PadText><Drop><Tri /></Drop></Field>
              <Field $w={114} $h={39}><PadText $tight><Label $s={16} $ls={-0.37}>Ninguno</Label></PadText><Drop><Tri /></Drop></Field>
            </Row>
            <Row $mt={10}>
              <Field $w={158} $h={38}><Letter><Label $s={19.2} $c="#707070">A</Label></Letter><Inset><Label $s={15.5} $b>?</Label></Inset></Field>
              <Field $w={158} $h={38}>
                <I w={29} h={14} sw={2.5} c="#606060" vb="-5 0 29 14"><path d="M6.500 1.300h9.500M11.500 1v13M0 6.300h7.500M3.800 6v8" /></I>
                <Label $s={19.2} $ls={0.03} $c="#9a9a9a">Not set</Label><Unit>PX</Unit><Drop><Tri /></Drop>
              </Field>
            </Row>
            <Link $mt={12} $ls={0.12}>Restablecer valores predeterminados</Link>
          </Section>
          <Title $h={37}>REEMPLAZAR COLORES</Title>
          <Section $h={131} $pt={0}>
            <Tabs><ColorTab $on>Página<br />Actual</ColorTab><ColorTab>Proyecto<br />Completo</ColorTab></Tabs>
            <Checks><Check><Blue />Rellenos</Check><Check><Blue />Pincela…</Check><Check><Blue />Color de…</Check></Checks>
          </Section>
        </Inspector>
        <Scroll at={0} len={575} dim />
      </Body>

      <Taskbar>
        <Weather>
          <svg width="30" height="30" viewBox="0 0 30 30"><defs><linearGradient id="sun" x1="0" y1="0" x2="1" y2="1"><stop offset="0" stopColor="#ffb52e" /><stop offset="1" stopColor="#f07818" /></linearGradient></defs><circle cx="15" cy="15" r="15" fill="url(#sun)" /></svg>
          <Two><Label $s={16.5} $ls={0.3}>22°C</Label><Label $s={16.5} $ls={0.6} $c="#cfcfcf">Soleado</Label></Two>
        </Weather>
        <svg width="35" height="35" viewBox="0 0 35 35"><defs><linearGradient id="win" x1="0" y1="0" x2="1" y2="1"><stop offset="0" stopColor="#78dcff" /><stop offset="1" stopColor="#0a94f8" /></linearGradient></defs><path d="M1 0h16v16.500H0V1zM18 0h16l1 1v15.500H18zM0 18h17v17H1l-1-1zM18 18h17v16l-1 1H18z" fill="url(#win)" /></svg>
        <SearchPill>
          <I w={23} h={23} sw={2.6} c="#ddd"><circle cx="10" cy="9.500" r="8.200" /><path d="M15.500 15.500l6.500 7" /></I>
          <PillText>Buscar</PillText>
          <svg width="74" height="40" viewBox="0 0 74 40"><path d="M0 40q8-10 26-10h48l-6 8q-3 2-8 2z" fill="#20a8d0" /><path d="M0 40q8-9 26-10l-6 10z" fill="#7fd4d8" /><path d="M18 40q8-9 16-9h10q10 1 18 9z" fill="#b3a06a" /><path d="M27 34l2-6h12l2 6q-8 4-16 0z" fill="#8b6f62" /><path d="M31.500 28 33 12h4.500L39 28z" fill="#cdbdb2" /><path d="M32 20h6.500v2H32zM32.500 12h5.500v2h-5.500z" fill="#8d7468" /><path d="M33.500 6h3.500v6h-3.500z" fill="#d8c8ba" /><path d="M33 6l2.300-6L37.500 6z" fill="#3e8f78" /></svg>
        </SearchPill>
        <Apps>
          <AppTile><SpotDisc><FaSpotify size={35} color="#1ed760" /></SpotDisc></AppTile>
          <AppTile $on>
            <svg width="36" height="36" viewBox="0 0 36 36"><circle cx="18" cy="18" r="18" fill="#fcc31e" /><path d="M18 9h15.600A18 18 0 0 0 2.400 9l7.800 13.500z" fill="#e33b2e" /><path d="M18 18 10.200 22.500 2.400 9A18 18 0 0 0 18 36l7.800-13.500z" fill="#2ba24c" /><circle cx="18" cy="18" r="9" fill="#fff" /><circle cx="18" cy="18" r="7" fill="#2a7df0" /></svg>
            <Mark $on />
          </AppTile>
          <AppTile>
            <svg width="36" height="34" viewBox="0 0 36 34"><path d="M0 2q0-2 2-2h9l4 4h-1v8H0z" fill="#dc9a08" /><path d="M0 7h11l4-4h19q2 0 2 2v26q0 2-2 2H2q-2 0-2-2z" fill="#fdca3d" /><path d="M6 34V24q0-3 3-3h18q3 0 3 3v10z" fill="#0f6fc0" /><path d="M11 27h14" stroke="#0a4a86" strokeWidth="2" /></svg>
            <Mark />
          </AppTile>
          <AppTile><Disc><FaDiscord size={24} /></Disc><Mark /></AppTile>
          <AppTile>
            <svg width="36" height="36" viewBox="0 0 36 36"><path d="M1 11.500l3-2.500 23 17.500V36z" fill="#0d7fc8" /><path d="M1 24.500l3 2.500L27 9.500V0z" fill="#1a93de" /><path d="M26 0l8.500 4Q36 5 36 6.500v23q0 1.500-1.500 2.500L26 36q1.500-1 1.500-3V3q0-2-1.500-3z" fill="#2aaaf5" /></svg>
            <Mark />
          </AppTile>
        </Apps>
        <Tray>
          <I w={16} h={10} c="#fff" sw={1.8}><path d="M1 8.500l7-7 7 7" /></I>
          <MdCloud size={25} color="#dcdcdc" />
          <svg width="27" height="27" viewBox="0 0 27 27"><path d="M2.500 12A11 11 0 0 1 22 6.500M22.500 1v6.500H16M24 13q0 3-1 5M4.500 26v-6.500H11M5 20q3 4 8 4" fill="none" stroke="#e6e6e6" strokeWidth="2" /><circle cx="19" cy="20" r="6" fill="#f28c1c" /></svg>
          <MdMicNone size={26} color="#d5694a" />
          <I w={26} h={20} c="#fff" sw={1.7}><path d="M1.500 7.500q11.500-11 23 0M5 11.500q8-7.500 16 0M8.700 15q4.300-4 8.600 0" /><circle cx="13" cy="17.500" r="1.800" fill="#fff" stroke="none" /></I>
          <I w={26} h={22} c="#fff" sw={1.7}><path d="M2 8h4l6-6v18l-6-6H2zM15.500 7.500q2 3.500 0 7M18.500 4.500q4.500 6.500 0 13M21.500 2q6.500 9 0 18" /></I>
          <I w={26} h={20} c="#fff" sw={1.8}><path d="M11 5h10q2 0 2 2v9q0 2-2 2H6q-2 0-2-2V13M25 9.500v4" /><path d="M9 11q3-1 3-4h8v8H7v-3z" fill="#fff" stroke="none" /><path d="M3 1v3M8 1v3M1 4.500h9V7q0 3-4.500 3.500Q1 10 1 7z" fill="#fff" strokeWidth="1.400" /></I>
        </Tray>
        <Clock><Two $end><Label $s={16.5} $ls={0.3}>17:39</Label><Label $s={16.5} $ls={0.5}>10/5/2023</Label></Two></Clock>
        <Count>10</Count>
      </Taskbar>
    </Screen>
  );
}
